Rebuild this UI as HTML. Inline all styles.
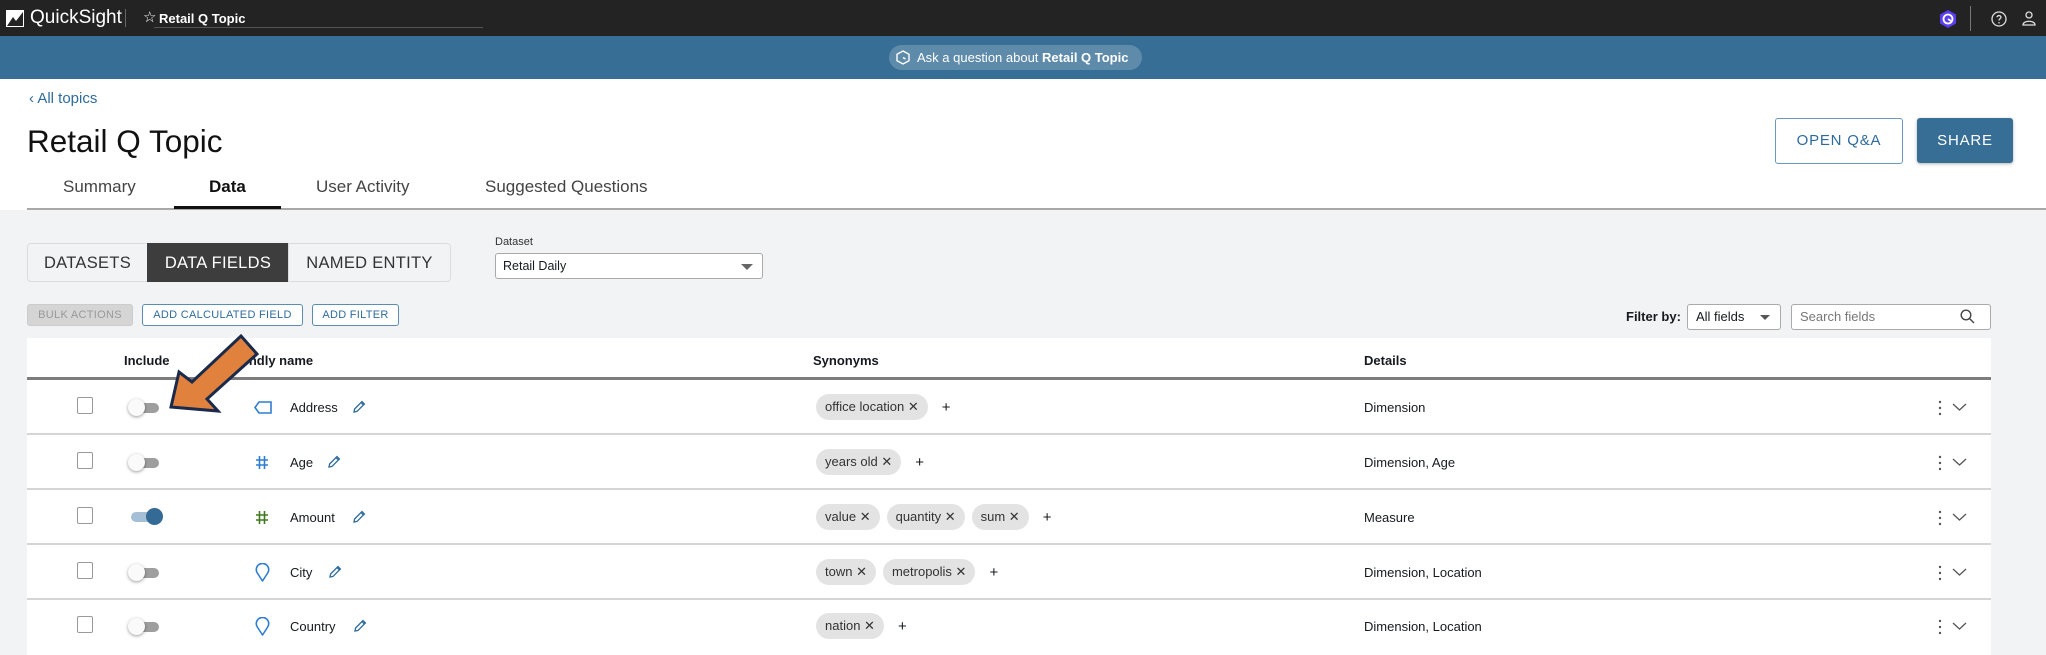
<!DOCTYPE html>
<html><head><meta charset="utf-8"><style>
*{box-sizing:border-box;margin:0;padding:0}
body{width:2046px;height:652px;overflow:hidden;background:#f2f3f5;font-family:"Liberation Sans",sans-serif;color:#16191f;position:relative}
.a{position:absolute}
.top{left:0;top:0;width:2046px;height:36px;background:#232323}
.band{left:0;top:36px;width:2046px;height:43px;background:#376e96}
.white{left:0;top:79px;width:2046px;height:131px;background:#fff}
.t{white-space:nowrap}
.tab{top:177px;font-size:17px;color:#444}
.seg{top:243px;height:39px;font-size:16.5px;line-height:39px;text-align:center;border:1px solid #dcdcdc;background:#f2f3f5;color:#333;letter-spacing:.3px}
.btn{top:304px;height:22px;font-size:11px;line-height:20px;text-align:center;border:1px solid #5a8db5;border-radius:3px;color:#2e6b9b;background:#fff;letter-spacing:.3px}
.row{left:27px;width:1964px;height:55px;background:#fff;border-bottom:2px solid #d5d5d5}
.cb{width:16px;height:17px;border:1px solid #999;border-radius:2px;background:#fff}
.trk{width:26px;height:10px;border-radius:5px;background:#9e9e9e}
.knob{width:17px;height:17px;border-radius:50%;background:#fafafa;box-shadow:0 1px 3px rgba(0,0,0,.4)}
.nm{font-size:13px}
.chip{height:26px;border-radius:13px;background:#e3e3e3;font-size:13px;line-height:26px;padding:0 9px;color:#333}
.det{font-size:13px}
</style></head><body>
<div class="a top"></div>
<svg class="a" style="left:6px;top:10px" width="18" height="17" viewBox="0 0 18 17"><rect x="0" y="0" width="18" height="17" fill="#fff"/><path d="M1 16 L7 7 L10 11 L17 2 L17 16 Z" fill="#232323"/></svg>
<div class="a t" style="left:30px;top:7px;font-size:19px;color:#fff">QuickSight</div>
<div class="a" style="left:125px;top:9px;width:1px;height:18px;background:#666"></div>
<div class="a t" style="left:143px;top:8px;font-size:15px;color:#fff">☆</div>
<div class="a t" style="left:159px;top:11px;font-size:13px;font-weight:bold;color:#fff">Retail Q Topic</div>
<div class="a" style="left:154px;top:27px;width:329px;height:1px;background:#555"></div>
<svg class="a" style="left:1938px;top:9px" width="20" height="20" viewBox="0 0 20 20"><path d="M10 1 L18 5.5 L18 14.5 L10 19 L2 14.5 L2 5.5 Z" fill="#5b3ef0"/><circle cx="10" cy="10" r="4.5" fill="none" stroke="#fff" stroke-width="1.8"/><path d="M10 10 L13 12" stroke="#fff" stroke-width="1.8"/></svg>
<div class="a" style="left:1970px;top:6px;width:1px;height:25px;background:#777"></div>
<svg class="a" style="left:1991px;top:11px" width="16" height="16" viewBox="0 0 16 16"><circle cx="8" cy="8" r="7" fill="none" stroke="#ddd" stroke-width="1.3"/><path d="M6 6.2 C6 4 10 4 10 6.2 C10 7.6 8 7.6 8 9.5" fill="none" stroke="#ddd" stroke-width="1.3"/><circle cx="8" cy="11.8" r=".8" fill="#ddd"/></svg>
<svg class="a" style="left:2022px;top:11px" width="14" height="15" viewBox="0 0 14 15"><circle cx="7" cy="4" r="3" fill="none" stroke="#ddd" stroke-width="1.3"/><path d="M1 14 C1 9 13 9 13 14 Z" fill="none" stroke="#ddd" stroke-width="1.3"/></svg>
<div class="a band"></div>
<div class="a" style="left:889px;top:45px;width:253px;height:25px;border-radius:13px;background:rgba(255,255,255,.2)"></div>
<svg class="a" style="left:896px;top:50px" width="14" height="15" viewBox="0 0 14 15"><path d="M7 1 L13 4.3 L13 10.7 L7 14 L1 10.7 L1 4.3 Z" fill="none" stroke="#fff" stroke-width="1.4"/><path d="M7 7.5 L9.5 9" stroke="#fff" stroke-width="1.4"/></svg>
<div class="a t" style="left:917px;top:50px;font-size:13px;color:#fff">Ask a question about <b>Retail Q Topic</b></div>
<div class="a white"></div>
<div class="a t" style="left:29px;top:90px;font-size:15px;color:#2e6b9b">‹ All topics</div>
<div class="a t" style="left:27px;top:123px;font-size:31.5px;color:#111">Retail Q Topic</div>
<div class="a t tab" style="left:63px">Summary</div>
<div class="a t tab" style="left:209px;font-weight:bold;color:#111">Data</div>
<div class="a t tab" style="left:316px">User Activity</div>
<div class="a t tab" style="left:485px">Suggested Questions</div>
<div class="a" style="left:27px;top:208px;width:2019px;height:2px;background:#a8a8a8"></div>
<div class="a" style="left:174px;top:206px;width:107px;height:3px;background:#111"></div>
<div class="a" style="left:1775px;top:118px;width:128px;height:46px;border:1px solid #6a99bf;border-radius:3px;background:#fff;color:#2e6b9b;font-size:15px;line-height:44px;text-align:center;letter-spacing:.8px">OPEN Q&amp;A</div>
<div class="a" style="left:1917px;top:118px;width:96px;height:45px;border-radius:3px;background:#376e96;color:#fff;font-size:15px;line-height:45px;text-align:center;letter-spacing:.8px;box-shadow:0 1px 3px rgba(0,0,0,.3)">SHARE</div>
<div class="a seg" style="left:27px;width:121px;border-radius:4px 0 0 4px">DATASETS</div>
<div class="a seg" style="left:147px;width:142px;background:#3d3d3d;color:#fff;border-color:#3d3d3d">DATA FIELDS</div>
<div class="a seg" style="left:288px;width:163px;border-radius:0 4px 4px 0">NAMED ENTITY</div>
<div class="a t" style="left:495px;top:236px;font-size:11px;color:#333">Dataset</div>
<div class="a" style="left:495px;top:253px;width:268px;height:26px;border:1px solid #aaa;border-radius:3px;background:#fff;font-size:12.5px;line-height:24px;padding-left:7px">Retail Daily</div>
<div class="a" style="left:741px;top:264px;border-left:6px solid transparent;border-right:6px solid transparent;border-top:6px solid #666"></div>
<div class="a btn" style="left:27px;width:106px;background:#d5d5d5;border-color:#ccc;color:#999">BULK ACTIONS</div>
<div class="a btn" style="left:142px;width:161px">ADD CALCULATED FIELD</div>
<div class="a btn" style="left:312px;width:87px">ADD FILTER</div>
<div class="a t" style="left:1626px;top:309px;font-size:13px;font-weight:bold">Filter by:</div>
<div class="a" style="left:1687px;top:304px;width:94px;height:26px;border:1px solid #aaa;border-radius:3px;background:#fff;font-size:13px;line-height:24px;padding-left:8px">All fields</div>
<div class="a" style="left:1760px;top:315px;border-left:5px solid transparent;border-right:5px solid transparent;border-top:5px solid #555"></div>
<div class="a" style="left:1791px;top:304px;width:200px;height:26px;border:1px solid #aaa;border-radius:3px;background:#fff;font-size:13px;line-height:24px;padding-left:8px;color:#777">Search fields</div>
<svg class="a" style="left:1960px;top:309px" width="15" height="15" viewBox="0 0 15 15"><circle cx="6" cy="6" r="4.8" fill="none" stroke="#444" stroke-width="1.4"/><path d="M9.5 9.5 L14 14" stroke="#444" stroke-width="1.4"/></svg>
<div class="a" style="left:27px;top:338px;width:1964px;height:42px;background:#fff;border-bottom:3px solid #7d7d7d"></div>
<div class="a t" style="left:124px;top:353px;font-size:13px;font-weight:bold">Include</div>
<div class="a t" style="left:225px;top:353px;font-size:13px;font-weight:bold">Friendly name</div>
<div class="a t" style="left:813px;top:353px;font-size:13px;font-weight:bold">Synonyms</div>
<div class="a t" style="left:1364px;top:353px;font-size:13px;font-weight:bold">Details</div>

<div class="a row" style="top:380px"></div>
<div class="a row" style="top:435px"></div>
<div class="a row" style="top:490px"></div>
<div class="a row" style="top:545px"></div>
<div class="a row" style="top:600px;border-bottom:none"></div>

<div class="a cb" style="left:77px;top:397px"></div>
<div class="a cb" style="left:77px;top:452px"></div>
<div class="a cb" style="left:77px;top:507px"></div>
<div class="a cb" style="left:77px;top:562px"></div>
<div class="a cb" style="left:77px;top:616px"></div>

<div class="a trk" style="left:133px;top:403px"></div><div class="a knob" style="left:128px;top:399px"></div>
<div class="a trk" style="left:133px;top:458px"></div><div class="a knob" style="left:128px;top:454px"></div>
<div class="a trk" style="left:131px;top:512px;background:#a5bfd6"></div><div class="a knob" style="left:146px;top:508px;background:#336b96;box-shadow:none"></div>
<div class="a trk" style="left:133px;top:568px"></div><div class="a knob" style="left:128px;top:564px"></div>
<div class="a trk" style="left:133px;top:622px"></div><div class="a knob" style="left:128px;top:618px"></div>

<svg class="a" style="left:254px;top:401px" width="18" height="13" viewBox="0 0 18 13"><path d="M5 1 L17 1 L17 12 L5 12 L1 6.5 Z" fill="none" stroke="#2f7dd1" stroke-width="1.6"/></svg>
<svg class="a" style="left:255px;top:455px" width="14" height="15" viewBox="0 0 14 15"><path d="M4.5 1 V14 M9.5 1 V14 M1 5 H13 M1 10 H13" stroke="#2f7dd1" stroke-width="1.6"/></svg>
<svg class="a" style="left:255px;top:510px" width="14" height="15" viewBox="0 0 14 15"><path d="M4.5 1 V14 M9.5 1 V14 M1 5 H13 M1 10 H13" stroke="#3f7a1f" stroke-width="1.6"/></svg>
<svg class="a" style="left:255px;top:563px" width="15" height="19" viewBox="0 0 15 19"><path d="M7.5 18 L2.3 10 A6.2 6.2 0 1 1 12.7 10 Z" fill="none" stroke="#2f7dd1" stroke-width="1.6" stroke-linejoin="round"/></svg>
<svg class="a" style="left:255px;top:617px" width="15" height="19" viewBox="0 0 15 19"><path d="M7.5 18 L2.3 10 A6.2 6.2 0 1 1 12.7 10 Z" fill="none" stroke="#2f7dd1" stroke-width="1.6" stroke-linejoin="round"/></svg>

<div class="a t nm" style="left:290px;top:400px">Address</div>
<div class="a t nm" style="left:290px;top:455px">Age</div>
<div class="a t nm" style="left:290px;top:510px">Amount</div>
<div class="a t nm" style="left:290px;top:565px">City</div>
<div class="a t nm" style="left:290px;top:619px">Country</div>

<svg width="0" height="0" style="position:absolute"><defs><symbol id="pen" viewBox="0 0 14 14"><path d="M2 12 L2.6 9 L10 1.6 L12.4 4 L5 11.4 Z M9 2.6 L11.4 5" fill="none" stroke="#2e6b9b" stroke-width="1.3"/></symbol></defs></svg>
<svg class="a" style="left:352px;top:400px" width="14" height="14"><use href="#pen"/></svg>
<svg class="a" style="left:327px;top:455px" width="14" height="14"><use href="#pen"/></svg>
<svg class="a" style="left:352px;top:510px" width="14" height="14"><use href="#pen"/></svg>
<svg class="a" style="left:328px;top:565px" width="14" height="14"><use href="#pen"/></svg>
<svg class="a" style="left:353px;top:619px" width="14" height="14"><use href="#pen"/></svg>

<div class="a t" style="left:816px;top:394px;display:flex;gap:7px;align-items:center"><span class="chip">office location ✕</span><span style="font-size:15px;margin-left:7px">+</span></div>
<div class="a t" style="left:816px;top:449px;display:flex;gap:7px;align-items:center"><span class="chip">years old ✕</span><span style="font-size:15px;margin-left:7px">+</span></div>
<div class="a t" style="left:816px;top:504px;display:flex;gap:7px;align-items:center"><span class="chip">value ✕</span><span class="chip">quantity ✕</span><span class="chip">sum ✕</span><span style="font-size:15px;margin-left:7px">+</span></div>
<div class="a t" style="left:816px;top:559px;display:flex;gap:7px;align-items:center"><span class="chip">town ✕</span><span class="chip">metropolis ✕</span><span style="font-size:15px;margin-left:7px">+</span></div>
<div class="a t" style="left:816px;top:613px;display:flex;gap:7px;align-items:center"><span class="chip">nation ✕</span><span style="font-size:15px;margin-left:7px">+</span></div>

<div class="a t det" style="left:1364px;top:400px">Dimension</div>
<div class="a t det" style="left:1364px;top:455px">Dimension, Age</div>
<div class="a t det" style="left:1364px;top:510px">Measure</div>
<div class="a t det" style="left:1364px;top:565px">Dimension, Location</div>
<div class="a t det" style="left:1364px;top:619px">Dimension, Location</div>

<svg width="0" height="0" style="position:absolute"><defs><symbol id="act" viewBox="0 0 40 18"><circle cx="3" cy="3" r="1.2" fill="#555"/><circle cx="3" cy="9" r="1.2" fill="#555"/><circle cx="3" cy="15" r="1.2" fill="#555"/><path d="M16 5 L22.5 11 L29 5" fill="none" stroke="#555" stroke-width="1.3"/></symbol></defs></svg>
<svg class="a" style="left:1937px;top:399px" width="40" height="18"><use href="#act"/></svg>
<svg class="a" style="left:1937px;top:454px" width="40" height="18"><use href="#act"/></svg>
<svg class="a" style="left:1937px;top:509px" width="40" height="18"><use href="#act"/></svg>
<svg class="a" style="left:1937px;top:564px" width="40" height="18"><use href="#act"/></svg>
<svg class="a" style="left:1937px;top:618px" width="40" height="18"><use href="#act"/></svg>

<svg class="a" style="left:0;top:0" width="400" height="450" viewBox="0 0 400 450"><path d="M171 407 L179 372 L192 382 L241 336 L257 354 L207 399 L218 411 Z" fill="#e0823e" stroke="#1b2a4a" stroke-width="3" stroke-linejoin="miter"/></svg>
</body></html>
